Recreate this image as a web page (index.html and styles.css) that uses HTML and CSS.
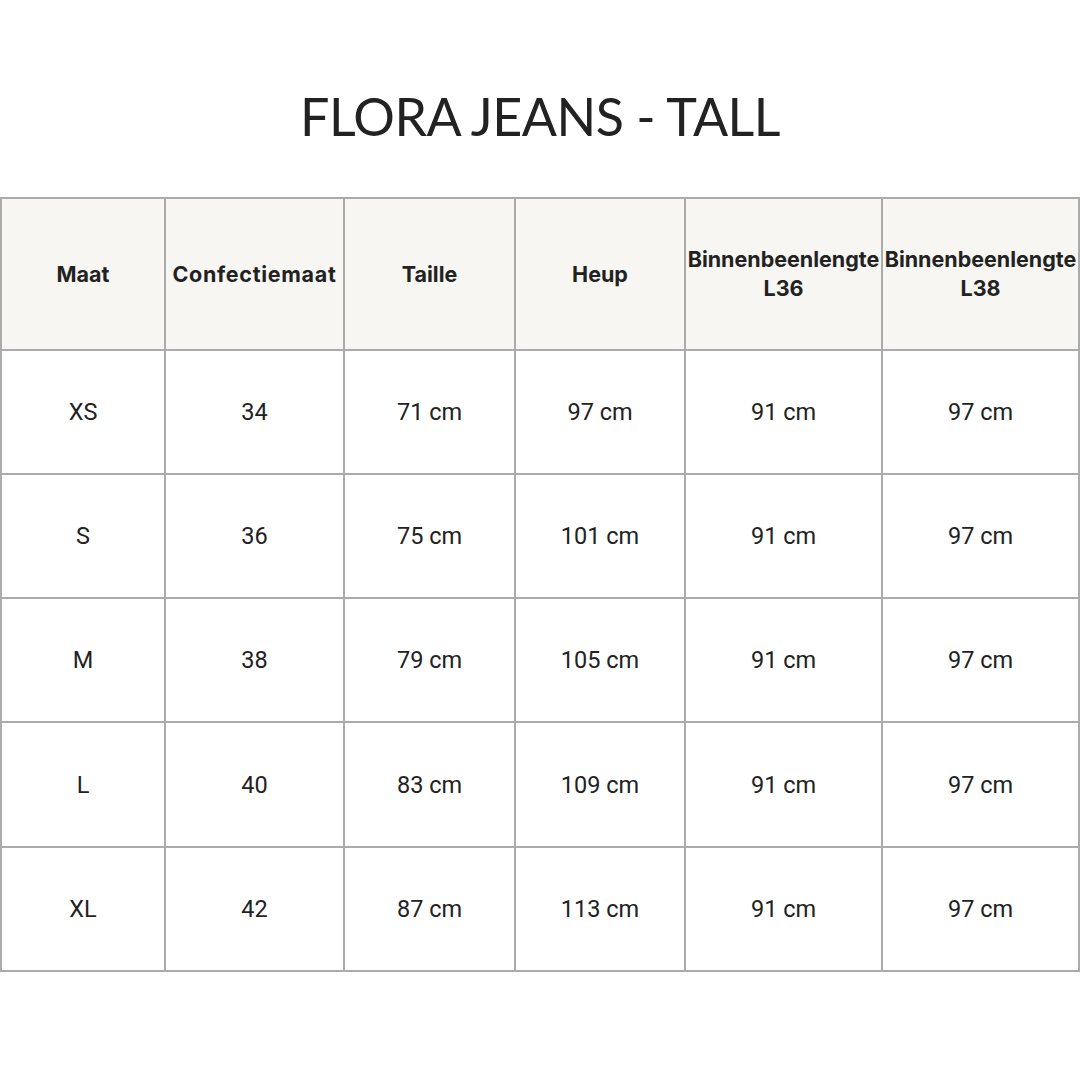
FILE: index.html
```html
<!DOCTYPE html>
<html>
<head>
<meta charset="utf-8">
<link rel="stylesheet" href="styles.css">
</head>
<body>
<div class="page">
  <h1 class="title">FLORA JEANS - TALL</h1>
  <div class="table">
    <div class="cell head">Maat</div>
    <div class="cell head wide">Confectiemaat</div>
    <div class="cell head">Taille</div>
    <div class="cell head">Heup</div>
    <div class="cell head">Binnenbeenlengte<br>L36</div>
    <div class="cell head">Binnenbeenlengte<br>L38</div>

    <div class="cell">XS</div><div class="cell">34</div><div class="cell">71 cm</div><div class="cell">97 cm</div><div class="cell">91 cm</div><div class="cell">97 cm</div>
    <div class="cell">S</div><div class="cell">36</div><div class="cell">75 cm</div><div class="cell">101 cm</div><div class="cell">91 cm</div><div class="cell">97 cm</div>
    <div class="cell">M</div><div class="cell">38</div><div class="cell">79 cm</div><div class="cell">105 cm</div><div class="cell">91 cm</div><div class="cell">97 cm</div>
    <div class="cell">L</div><div class="cell">40</div><div class="cell">83 cm</div><div class="cell">109 cm</div><div class="cell">91 cm</div><div class="cell">97 cm</div>
    <div class="cell">XL</div><div class="cell">42</div><div class="cell">87 cm</div><div class="cell">113 cm</div><div class="cell">91 cm</div><div class="cell">97 cm</div>
  </div>
</div>
</body>
</html>
```

FILE: styles.css
```css
html, body {
  margin: 0;
  padding: 0;
  background: #ffffff;
}
.page {
  width: 1080px;
  height: 1080px;
  display: flex;
  flex-direction: column;
}
.title {
  margin: 0;
  height: 197px;
  box-sizing: border-box;
  padding-top: 84px;
  text-align: center;
  font-family: "Lato", "DejaVu Sans", sans-serif;
  font-weight: 400;
  font-size: 52px;
  line-height: 64px;
  letter-spacing: -0.5px;
  color: #222222;
}
.table {
  display: grid;
  grid-template-columns: 162px 177px 169px 168px 195px 195px;
  grid-template-rows: 150px 122px 122px 122px 123px 122px;
  gap: 2px;
  padding: 2px;
  background: #ababab;
  width: 1080px;
  box-sizing: border-box;
}
.cell {
  background: #ffffff;
  display: flex;
  align-items: center;
  justify-content: center;
  text-align: center;
  font-family: "Roboto", "Liberation Sans", sans-serif;
  font-size: 23.5px;
  color: #222222;
  white-space: nowrap;
}
.head {
  background: #f7f6f2;
  font-family: "Inter", "Liberation Sans", sans-serif;
  font-weight: 700;
  font-size: 21.5px;
  line-height: 29px;
}
.wide {
  letter-spacing: 0.7px;
}
```
